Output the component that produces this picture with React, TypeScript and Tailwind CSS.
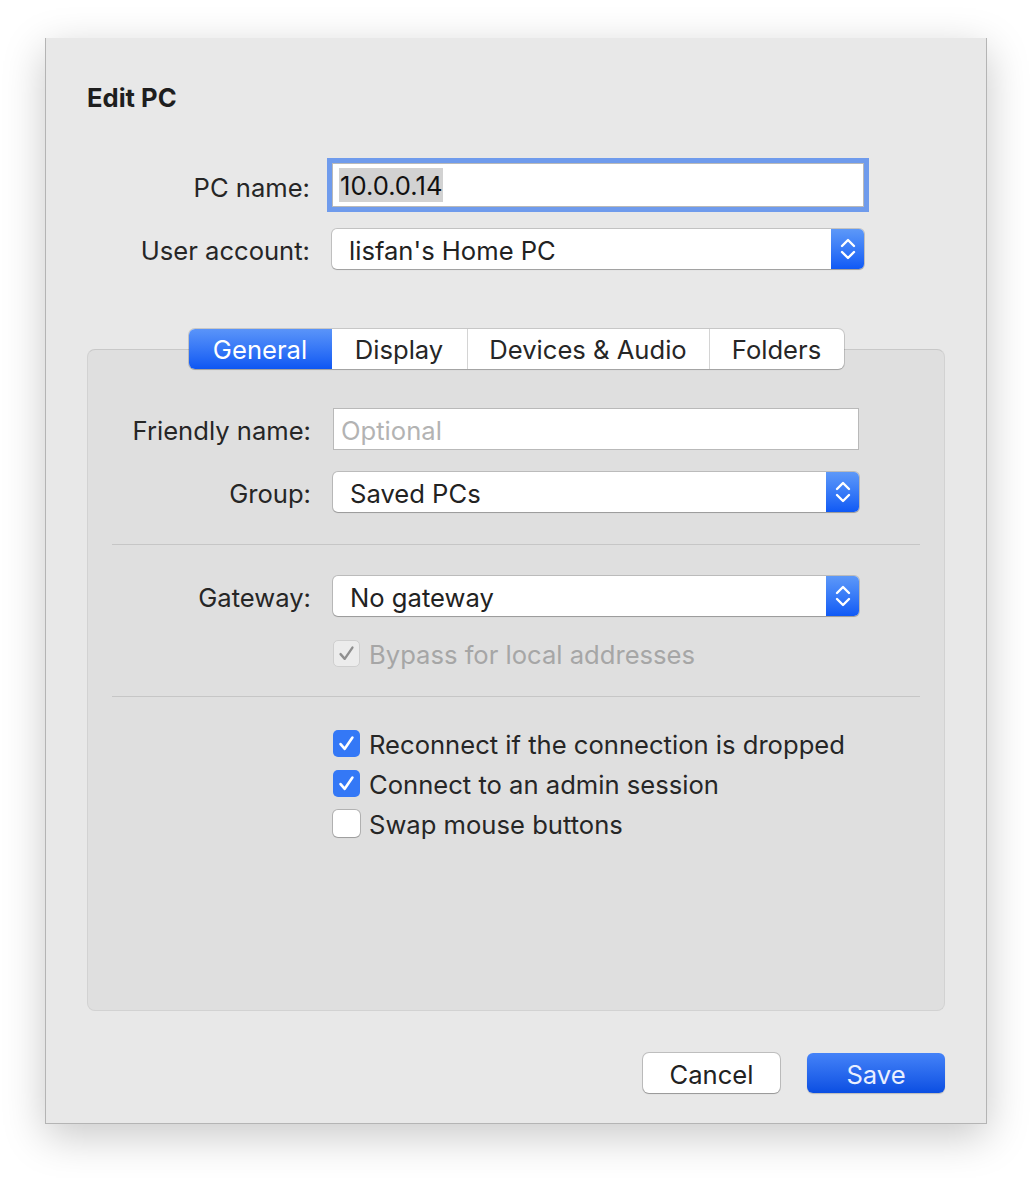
import type { ReactNode } from 'react';

const font = { fontFamily: 'Inter, "Noto Sans", sans-serif' };

function Stepper() {
  return (
    <div className="flex h-full w-[33px] items-center justify-center rounded-r-[5px] bg-gradient-to-b from-[#5d98f8] to-[#0f59f5]">
      <svg width="18" height="28" viewBox="0 0 18 28" fill="none" stroke="white" strokeWidth="2.4" strokeLinecap="round" strokeLinejoin="round">
        <path d="M3 11 L9 5 L15 11" />
        <path d="M3 17 L9 23 L15 17" />
      </svg>
    </div>
  );
}

function Select({ value, width }: { value: string; width: string }) {
  return (
    <div className={`flex h-[40px] ${width} items-stretch rounded-[5px] bg-white shadow-[0_0_0_1px_rgba(0,0,0,0.16),0_1px_1px_rgba(0,0,0,0.18)]`}>
      <div className="flex flex-1 items-center pl-[17px] pt-[3px] text-[#222]">{value}</div>
      <Stepper />
    </div>
  );
}

function Row({ label, children, labelWidth }: { label: string; children: ReactNode; labelWidth: string }) {
  return (
    <div className="flex items-center">
      <div className={`${labelWidth} shrink-0 pr-[22px] pt-[4px] text-right text-[#262626]`}>{label}</div>
      {children}
    </div>
  );
}

function Check({ checked, disabled }: { checked: boolean; disabled?: boolean }) {
  if (disabled) {
    return (
      <div className="flex h-[27px] w-[27px] items-center justify-center rounded-[5px] border border-[#cfcfcf] bg-[#ececec]">
        <svg width="19" height="19" viewBox="0 0 16 16" fill="none" stroke="#8f8f8f" strokeWidth="2" strokeLinecap="round" strokeLinejoin="round">
          <path d="M3 8.5 L6.5 12.5 L13 3" />
        </svg>
      </div>
    );
  }
  if (checked) {
    return (
      <div className="flex h-[27px] w-[27px] items-center justify-center rounded-[5px] bg-[#3478f6]">
        <svg width="19" height="19" viewBox="0 0 16 16" fill="none" stroke="white" strokeWidth="2.2" strokeLinecap="round" strokeLinejoin="round">
          <path d="M3 8.5 L6.5 12.5 L13 3" />
        </svg>
      </div>
    );
  }
  return <div className="h-[27px] w-[27px] rounded-[5px] bg-white shadow-[0_0_0_1px_rgba(0,0,0,0.2),0_1px_1px_rgba(0,0,0,0.12)]" />;
}

function CheckRow({ label, checked, disabled }: { label: string; checked: boolean; disabled?: boolean }) {
  return (
    <div className="flex h-[40px] items-center gap-[9px]">
      <Check checked={checked} disabled={disabled} />
      <span className={`pt-[3px] ${disabled ? 'text-[#a6a6a6]' : 'text-[#262626]'}`}>{label}</span>
    </div>
  );
}

const tabs = [
  { name: 'General', w: 'w-[143px]' },
  { name: 'Display', w: 'w-[135px]' },
  { name: 'Devices & Audio', w: 'w-[242px]' },
  { name: 'Folders', w: 'w-[135px]' },
];

export default function App() {
  return (
    <div className="h-[1178px] w-[1032px] overflow-hidden bg-white pt-[38px] pl-[45px] text-[25.6px] leading-none" style={font}>
      <div className="flex h-[1086px] w-[942px] flex-col border-x border-b border-[#b4b4b4] bg-[#e8e8e8] px-[41px] pt-[39px] shadow-[0_12px_40px_rgba(0,0,0,0.22)]">
        <div className="flex h-[40px] items-center pt-[1px] font-bold text-[#1e1e1e]">Edit PC</div>

        {/* top fields */}
        <div className="mt-[41px] flex h-[54px] items-center">
          <div className="w-[245px] shrink-0 pr-[22px] pt-[5px] text-right text-[#262626]">PC name:</div>
          <div className="flex h-[44px] w-[532px] items-center border border-[#b9b9b9] bg-white pl-[6px] shadow-[0_0_0_5px_#6f9bec]">
            <span className="bg-[#d2d2d2] px-px pt-[2px] leading-[32px] text-[#111]">10.0.0.14</span>
          </div>
        </div>
        <div className="mt-[17px]">
          <Row label="User account:" labelWidth="w-[245px]">
            <Select value="lisfan's Home PC" width="w-[532px]" />
          </Row>
        </div>

        {/* tab view */}
        <div className="mt-[60px] flex flex-col">
          <div className="relative z-10 flex justify-center">
            <div className="flex h-[40px] overflow-hidden rounded-[6px] bg-white shadow-[0_0_0_1px_rgba(0,0,0,0.14),0_1px_1px_rgba(0,0,0,0.16)]">
              {tabs.map((t, i) => (
                <div
                  key={t.name}
                  className={`flex ${t.w} items-center justify-center pt-[2px] ${
                    i === 0
                      ? 'bg-gradient-to-b from-[#5a94f9] to-[#0d56f3] text-white'
                      : 'text-[#262626]'
                  } ${i > 1 ? 'border-l border-[#d4d4d4]' : ''}`}
                >
                  {t.name}
                </div>
              ))}
            </div>
          </div>
          <div className="-mt-[20px] flex h-[662px] flex-col rounded-[8px] border border-[#d2d2d2] border-t-[#c8c8c8] bg-[#dfdfdf] pt-[58px]">
            <Row label="Friendly name:" labelWidth="w-[245px]">
              <div className="flex h-[42px] w-[526px] items-center border border-[#b9b9b9] bg-white pl-[7px] pt-[3px] text-[#b3b3b3]">
                Optional
              </div>
            </Row>
            <div className="mt-[22px]">
              <Row label="Group:" labelWidth="w-[245px]">
                <Select value="Saved PCs" width="w-[526px]" />
              </Row>
            </div>
            <div className="mx-[24px] mt-[32px] h-px bg-[#c6c6c6]" />
            <div className="mt-[31px]">
              <Row label="Gateway:" labelWidth="w-[245px]">
                <Select value="No gateway" width="w-[526px]" />
              </Row>
            </div>
            <div className="ml-[245px] mt-[17px]">
              <CheckRow label="Bypass for local addresses" checked disabled />
            </div>
            <div className="mx-[24px] mt-[23px] h-px bg-[#c6c6c6]" />
            <div className="ml-[245px] mt-[26px] flex flex-col">
              <CheckRow label="Reconnect if the connection is dropped" checked />
              <CheckRow label="Connect to an admin session" checked />
              <CheckRow label="Swap mouse buttons" checked={false} />
            </div>
          </div>
        </div>

        {/* buttons */}
        <div className="mt-[42px] flex justify-end gap-[27px]">
          <button className="h-[40px] w-[137px] rounded-[6px] bg-white pt-[3px] text-[#222] shadow-[0_0_0_1px_rgba(0,0,0,0.18),0_1px_1px_rgba(0,0,0,0.2)]">
            Cancel
          </button>
          <button className="h-[40px] w-[138px] rounded-[6px] bg-gradient-to-b from-[#4482f8] to-[#0a4ee2] pt-[3px] text-[#e9efff] shadow-[0_1px_1px_rgba(0,0,0,0.2)]">
            Save
          </button>
        </div>
      </div>
    </div>
  );
}
